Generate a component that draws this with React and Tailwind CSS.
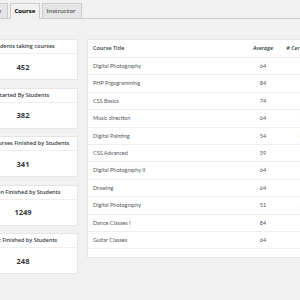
import React from 'react';

const stats = [
  { title: 'Students taking courses', value: '452' },
  { title: 'Started By Students', value: '382' },
  { title: 'Total Courses Finished by Students', value: '341' },
  { title: 'Lesson Finished by Students', value: '1249' },
  { title: 'Quiz Finished by Students', value: '248' },
];

const courses = [
  { title: 'Digital Photography', avg: 64, certs: 12 },
  { title: 'PHP Prgogramming', avg: 84, certs: 10 },
  { title: 'CSS Basics', avg: 74, certs: 15 },
  { title: 'Music direction', avg: 64, certs: 30 },
  { title: 'Digital Painting', avg: 54, certs: 80 },
  { title: 'CSS Advanced', avg: 59, certs: 11 },
  { title: 'Digital Photography II', avg: 64, certs: 14 },
  { title: 'Drawing', avg: 64, certs: 10 },
  { title: 'Digital Photography', avg: 51, certs: 21 },
  { title: 'Dance Classes I', avg: 84, certs: 6 },
  { title: 'Guitar Classes', avg: 64, certs: 11 },
];

const StatCard = ({ title, value }) => (
  <div className="bg-white border border-[#e5e5e5] h-[41px] flex flex-col">
    <div className="h-[14px] shrink-0 border-b border-[#eeeeee] flex items-center justify-center whitespace-nowrap text-[5.5px] font-semibold text-[#32373c]">
      {title}
    </div>
    <div className="flex-1 flex items-center justify-center pt-[2px] text-[7.5px] font-bold text-[#32373c]">
      {value}
    </div>
  </div>
);

export default function App() {
  return (
    <div
      className="w-[300px] h-[300px] overflow-hidden bg-[#f1f1f1]"
      style={{ fontFamily: '"Open Sans", sans-serif' }}
    >
      {/* Tabs */}
      <div className="h-[19px] border-b border-[#cccccc] flex items-end gap-[2px] ml-[-31px] whitespace-nowrap">
        <div className="h-[15px] px-[4px] flex items-center bg-[#e5e5e5] border border-b-0 border-[#cccccc] text-[6px] font-semibold text-[#555555] w-[38.5px]">
          Overview
        </div>
        <div className="h-[16px] mb-[-1px] px-[4px] flex items-center bg-[#f1f1f1] border border-b-0 border-[#cccccc] text-[6px] font-bold text-[#000000] w-[30px]">
          Course
        </div>
        <div className="h-[15px] px-[4px] flex items-center bg-[#e5e5e5] border border-b-0 border-[#cccccc] text-[6px] font-semibold text-[#555555] w-[40px]">
          Instructor
        </div>
      </div>

      {/* Content */}
      <div className="flex items-start gap-[9px] mt-[20px] ml-[-32px]">
        <div className="w-[110px] shrink-0 flex flex-col gap-[7.5px]">
          {stats.map(s => (
            <StatCard key={s.title} title={s.title} value={s.value} />
          ))}
        </div>

        <div className="w-[260px] shrink-0 bg-white border border-[#e5e5e5] pb-[8px]">
          <div className="h-[18px] pl-[5px] flex items-center border-b border-[#eeeeee] text-[5.5px] font-semibold text-[#32373c] whitespace-nowrap">
            <div className="w-[155px]">Course Title</div>
            <div className="w-[30px] text-center italic">Average</div>
            <div className="ml-[3px] w-[44px] text-center italic"># Certificates</div>
          </div>
          {courses.map((c, i) => (
            <div
              key={i}
              className="h-[17.4px] pl-[5px] flex items-center border-b border-[#eeeeee] text-[5.5px] text-[#555555] whitespace-nowrap"
              style={{ fontFamily: 'Lato, sans-serif' }}
            >
              <div className="w-[155px]">{c.title}</div>
              <div className="w-[30px] text-center">{c.avg}</div>
              <div className="ml-[3px] w-[44px] text-center">{c.certs}</div>
            </div>
          ))}
        </div>
      </div>
    </div>
  );
}
